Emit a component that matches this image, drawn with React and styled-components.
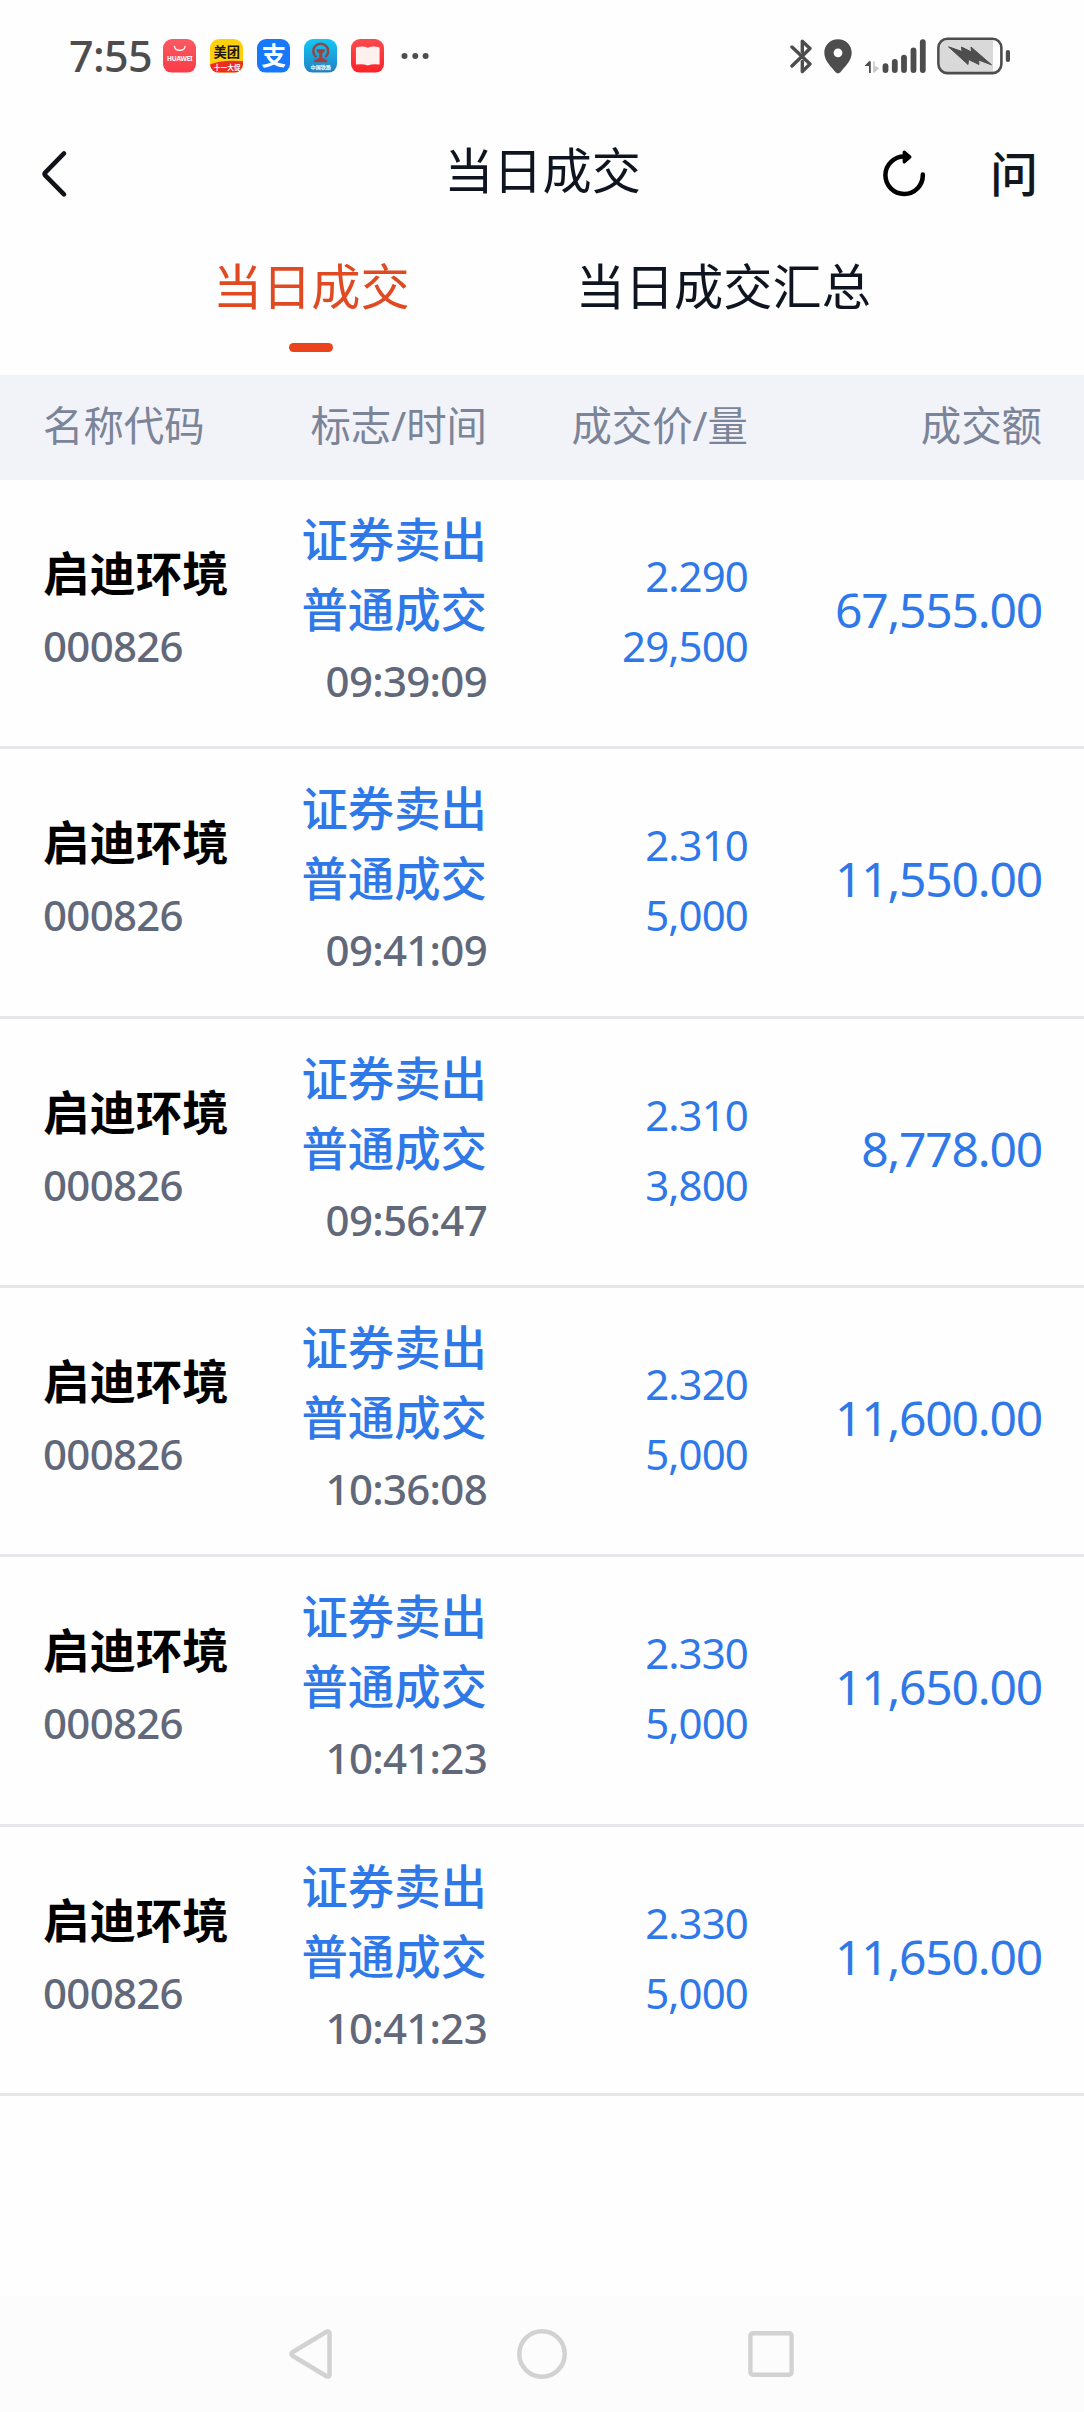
import styled, { createGlobalStyle } from 'styled-components';

const GlobalStyle = createGlobalStyle`
  * {
    box-sizing: border-box;
  }

  body {
    margin: 0;
    background: #fefefe;
    font-family: 'Noto Sans', 'Noto Sans CJK SC', sans-serif;
  }
`;

const Screen = styled.div`
  display: flex;
  flex-direction: column;
  width: 1084px;
  height: 2412px;
  background: #fefefe;
  overflow: hidden;
`;

const StatusBar = styled.div`
  display: flex;
  align-items: center;
  justify-content: space-between;
  height: 113px;
  padding: 0 73px 1px 69px;
`;

const StatusGroup = styled.div`
  display: flex;
  align-items: center;
  gap: ${({ $gap }) => $gap}px;
`;

const Clock = styled.span`
  width: 80.5px;
  color: #4d4d4d;
  font-size: 43px;
  font-weight: 500;
  line-height: 50px;
  letter-spacing: -0.6px;
  white-space: nowrap;
`;

const TitleBar = styled.header`
  display: grid;
  grid-template-columns: 200px 1fr 200px;
  align-items: center;
  height: 122px;
  padding: 0 46px 0 40px;
`;

const Title = styled.h1`
  margin: 0;
  padding: 0 0 8px 7px;
  color: #0f1520;
  font-size: 49.2px;
  font-weight: 400;
  line-height: 70px;
  text-align: center;
`;

const Actions = styled.div`
  display: flex;
  align-items: center;
  justify-content: flex-end;
  gap: 64px;
`;

const AskButton = styled.span`
  padding-bottom: 1px;
  color: #12171d;
  font-size: 48px;
  font-weight: 500;
  line-height: 48px;
`;

const Tabs = styled.nav`
  display: flex;
  gap: 166px;
  height: 140px;
  padding: 16px 0 0 213px;
`;

const Tab = styled.div`
  display: flex;
  flex-direction: column;
  align-items: center;
  color: ${({ $active }) => ($active ? '#e04a22' : '#0f1520')};
  font-size: 49.2px;
  line-height: 70px;

  &::after {
    content: '';
    width: 44px;
    height: 9px;
    margin-top: 22px;
    border-radius: 5px;
    background: ${({ $active }) => ($active ? '#eb431c' : 'transparent')};
  }
`;

const columns = '200px 244px 261px 294px';

const TableHead = styled.div`
  display: grid;
  grid-template-columns: ${columns};
  align-items: center;
  height: 105px;
  padding: 0 42px 3px 43px;
  background: #f2f3f8;
  color: #7b8498;
  font-size: 40.4px;
  line-height: 60px;
`;

const HeadCell = styled.div`
  text-align: ${({ $left }) => ($left ? 'left' : 'right')};
  white-space: nowrap;
`;

const Row = styled.div`
  display: grid;
  grid-template-columns: ${columns};
  align-items: center;
  height: 269.33px;
  padding: 0 42px 4px 43px;
  border-bottom: 3px solid #e5e7ea;
`;

const Cell = styled.div`
  display: flex;
  flex-direction: column;
  align-items: ${({ $left }) => ($left ? 'flex-start' : 'flex-end')};
  color: #2f78e8;
  font-size: 42px;
  line-height: 70px;
  letter-spacing: -0.9px;
  white-space: nowrap;
`;

// CJK names sit slightly higher than the digits on the same line box
const StockName = styled.span`
  height: 70px;
  color: #000;
  font-size: 46.4px;
  font-weight: 700;
  line-height: 65px;
  letter-spacing: 0;
`;

const Flag = styled.span`
  height: 70px;
  font-size: 46.4px;
  font-weight: 500;
  line-height: 67px;
  letter-spacing: 0;
`;

const Muted = styled.span`
  color: #616879;
  font-weight: 500;
  letter-spacing: -0.7px;
`;

const Amount = styled.span`
  padding-bottom: 2px;
  font-size: 48px;
  letter-spacing: -1.2px;
`;

const NavBar = styled.div`
  display: flex;
  justify-content: center;
  gap: 180px;
  align-items: center;
  height: 116px;
  margin-top: auto;
  background: #fcfcfc;
`;

const AppIcon = styled.svg`
  width: 33.5px;
  height: 33.5px;
  margin-right: 0.5px;
  border-radius: 9px;
`;

const trades = [
  { time: '09:39:09', price: '2.290', volume: '29,500', amount: '67,555.00' },
  { time: '09:41:09', price: '2.310', volume: '5,000', amount: '11,550.00' },
  { time: '09:56:47', price: '2.310', volume: '3,800', amount: '8,778.00' },
  { time: '10:36:08', price: '2.320', volume: '5,000', amount: '11,600.00' },
  { time: '10:41:23', price: '2.330', volume: '5,000', amount: '11,650.00' },
  { time: '10:41:23', price: '2.330', volume: '5,000', amount: '11,650.00' },
];

function NotificationIcons() {
  return (
    <>
      <AppIcon viewBox="0 0 34 34">
        <defs>
          <linearGradient id="huawei" x1="0" y1="0" x2="0" y2="1">
            <stop offset="0" stopColor="#fb5a62" />
            <stop offset="1" stopColor="#f83c48" />
          </linearGradient>
        </defs>
        <rect width="34" height="34" fill="url(#huawei)" />
        <path d="M11.5 7 C12 13 22 13 22.5 7" fill="none" stroke="#fff" strokeWidth="1.3" />
        <text x="17" y="22" fill="#fff" fontSize="6.6" fontWeight="700" textAnchor="middle" textLength="26">
          HUAWEI
        </text>
      </AppIcon>
      <AppIcon viewBox="0 0 34 34">
        <rect width="34" height="34" fill="#fdd00c" />
        <path d="M0 26 Q10 21 34 22.5 V34 H0 Z" fill="#ea2c22" />
        <text x="17" y="18.5" fill="#1d1803" fontSize="13.5" fontWeight="700" textAnchor="middle">
          美团
        </text>
        <text x="17.5" y="31.5" fill="#fff" fontSize="6.8" fontWeight="700" textAnchor="middle">
          十一大促
        </text>
      </AppIcon>
      <AppIcon viewBox="0 0 34 34">
        <rect width="34" height="34" fill="#1878fb" />
        <text x="17" y="26" fill="#fff" fontSize="25" fontWeight="700" textAnchor="middle">
          支
        </text>
      </AppIcon>
      <AppIcon viewBox="0 0 34 34">
        <defs>
          <linearGradient id="railway" x1="0" y1="0" x2="0" y2="1">
            <stop offset="0" stopColor="#12c8f4" />
            <stop offset="1" stopColor="#2180c4" />
          </linearGradient>
        </defs>
        <rect width="34" height="34" fill="url(#railway)" />
        <path d="M12.5 18.5 A7.6 7.6 0 1 1 21.5 18.5" fill="none" stroke="#8c4a48" strokeWidth="2.6" />
        <path d="M13 10.5 H21 V13 L18.5 14.5 V19 L23.5 21.5 V23.5 H10.5 V21.5 L15.5 19 V14.5 L13 13 Z" fill="#a3403b" />
        <text x="17" y="30.6" fill="#fff" fontSize="5.2" fontWeight="700" textAnchor="middle">
          中国铁路
        </text>
      </AppIcon>
      <AppIcon viewBox="0 0 34 34">
        <defs>
          <linearGradient id="reader" x1="0" y1="0" x2="0" y2="1">
            <stop offset="0" stopColor="#fb4b4d" />
            <stop offset="1" stopColor="#fb2329" />
          </linearGradient>
        </defs>
        <rect width="34" height="34" fill="url(#reader)" />
        <path d="M5 8.5 Q12 6.5 17 9 Q22 6.5 29 8.5 V26 Q22 24.8 17 27 Q12 24.8 5 26 Z" fill="#fdf1ee" />
      </AppIcon>
      <svg width="31" height="8" viewBox="0 0 31 8" fill="#4d4d4d">
        <circle cx="6.5" cy="4" r="3" />
        <circle cx="17.3" cy="4" r="3" />
        <circle cx="27.6" cy="4" r="3" />
      </svg>
    </>
  );
}

function SystemIcons() {
  return (
    <>
      <svg width="23" height="35" viewBox="0 0 23 35" fill="none" stroke="#4d4d4d" strokeWidth="3.4" strokeLinecap="round" strokeLinejoin="round">
        <path d="M2 8 L20 25 L12.3 32.5 V22.5" />
        <path d="M2 27 L20 9.5 L12.3 2.2 V13" />
      </svg>
      <svg width="28" height="35" viewBox="0 0 28 35">
        <path
          d="M14 0.3 C6 0.3 0.3 6.4 0.3 13.8 C0.3 22 7.5 28 11.6 33.3 Q14 35.6 16.4 33.3 C20.5 28 27.7 22 27.7 13.8 C27.7 6.4 22 0.3 14 0.3 Z M14 9.4 A4.4 4.4 0 1 1 14 18.2 A4.4 4.4 0 1 1 14 9.4 Z"
          fill="#4d4d4d"
          fillRule="evenodd"
        />
      </svg>
      <svg width="62" height="35" viewBox="0 0 62 35">
        <path d="M5 34 V27 H0.5 L5 22.3 H6.8 V34 Z" fill="#4d4d4d" />
        <path d="M9.2 22.5 H10.8 V27 L15.2 29 L10.8 33.5 H9.2 Z" fill="#c9c9c9" />
        <g stroke="#4d4d4d" strokeWidth="5.8" strokeLinecap="round">
          <path d="M21.5 27.2 V31" />
          <path d="M30.8 23 V31" />
          <path d="M40 18.6 V31" />
          <path d="M49.5 11.5 V31" />
          <path d="M58.8 3.2 V31" />
        </g>
      </svg>
      <svg width="74" height="38" viewBox="0 0 74 38">
        <path d="M9 3 H56 V35 H9 Q3 34 3 28 V10 Q3 4 9 3 Z" fill="#d9d9d9" />
        <rect x="1.4" y="1.7" width="63" height="34.4" rx="9" fill="none" stroke="#4d4d4d" strokeWidth="2.6" />
        <path d="M11.5 9.8 L25 14.5 L24.5 10 L34.5 15 L34 10 L54.5 27.8 L41.5 23 L42 27.5 L31.5 22.5 L31 27.5 Z" fill="#4d4d4d" stroke="#4d4d4d" strokeLinejoin="round" />
        <rect x="68.8" y="13" width="4.2" height="12" rx="2" fill="#4d4d4d" />
      </svg>
    </>
  );
}

function TradeRow({ trade }) {
  return (
    <Row>
      <Cell $left>
        <StockName>启迪环境</StockName>
        <Muted>000826</Muted>
      </Cell>
      <Cell>
        <Flag>证券卖出</Flag>
        <Flag>普通成交</Flag>
        <Muted>{trade.time}</Muted>
      </Cell>
      <Cell>
        <span>{trade.price}</span>
        <span>{trade.volume}</span>
      </Cell>
      <Cell>
        <Amount>{trade.amount}</Amount>
      </Cell>
    </Row>
  );
}

function App() {
  return (
    <Screen>
      <GlobalStyle />
      <StatusBar>
        <StatusGroup $gap={13}>
          <Clock>7:55</Clock>
          <NotificationIcons />
        </StatusGroup>
        <StatusGroup $gap={11.5}>
          <SystemIcons />
        </StatusGroup>
      </StatusBar>
      <TitleBar>
        <svg width="28" height="48" viewBox="0 0 28 48" fill="none" stroke="#101418" strokeWidth="4.6" strokeLinecap="round" strokeLinejoin="round">
          <path d="M24 3.4 L5.2 22.6 Q4 24 5.2 25.4 L24 44.3" />
        </svg>
        <Title>当日成交</Title>
        <Actions>
          <svg width="43" height="48" viewBox="0 0 43 48">
            <path d="M22 6.6 A18.7 18.7 0 1 0 39.8 24.6" fill="none" stroke="#000" strokeWidth="4.5" strokeLinecap="round" />
            <path d="M21.3 2.2 L26.8 7 L21.3 11.8 Z" fill="#000" stroke="#000" strokeWidth="3.4" strokeLinejoin="round" />
          </svg>
          <AskButton>问</AskButton>
        </Actions>
      </TitleBar>
      <Tabs>
        <Tab $active>当日成交</Tab>
        <Tab>当日成交汇总</Tab>
      </Tabs>
      <TableHead>
        <HeadCell $left>名称代码</HeadCell>
        <HeadCell>标志/时间</HeadCell>
        <HeadCell>成交价/量</HeadCell>
        <HeadCell>成交额</HeadCell>
      </TableHead>
      {trades.map((trade, index) => (
        <TradeRow key={index} trade={trade} />
      ))}
      <NavBar>
        <svg width="50" height="50" viewBox="0 0 50 50" fill="none" stroke="#d2d2d2" strokeWidth="4.5" strokeLinejoin="round">
          <path d="M42.5 4 V46 Q42 48.3 39.5 47.3 L5.5 26.8 Q3.4 25 5.5 23.2 L39.5 2.7 Q42 1.7 42.5 4 Z" />
        </svg>
        <svg width="50" height="50" viewBox="0 0 50 50" fill="none" stroke="#d2d2d2" strokeWidth="4.5">
          <circle cx="25" cy="25" r="22.7" />
        </svg>
        <svg width="50" height="50" viewBox="0 0 50 50" fill="none" stroke="#d2d2d2" strokeWidth="4.4">
          <rect x="3.4" y="4.2" width="41.2" height="41.6" rx="2.5" />
        </svg>
      </NavBar>
    </Screen>
  );
}

export default App;
